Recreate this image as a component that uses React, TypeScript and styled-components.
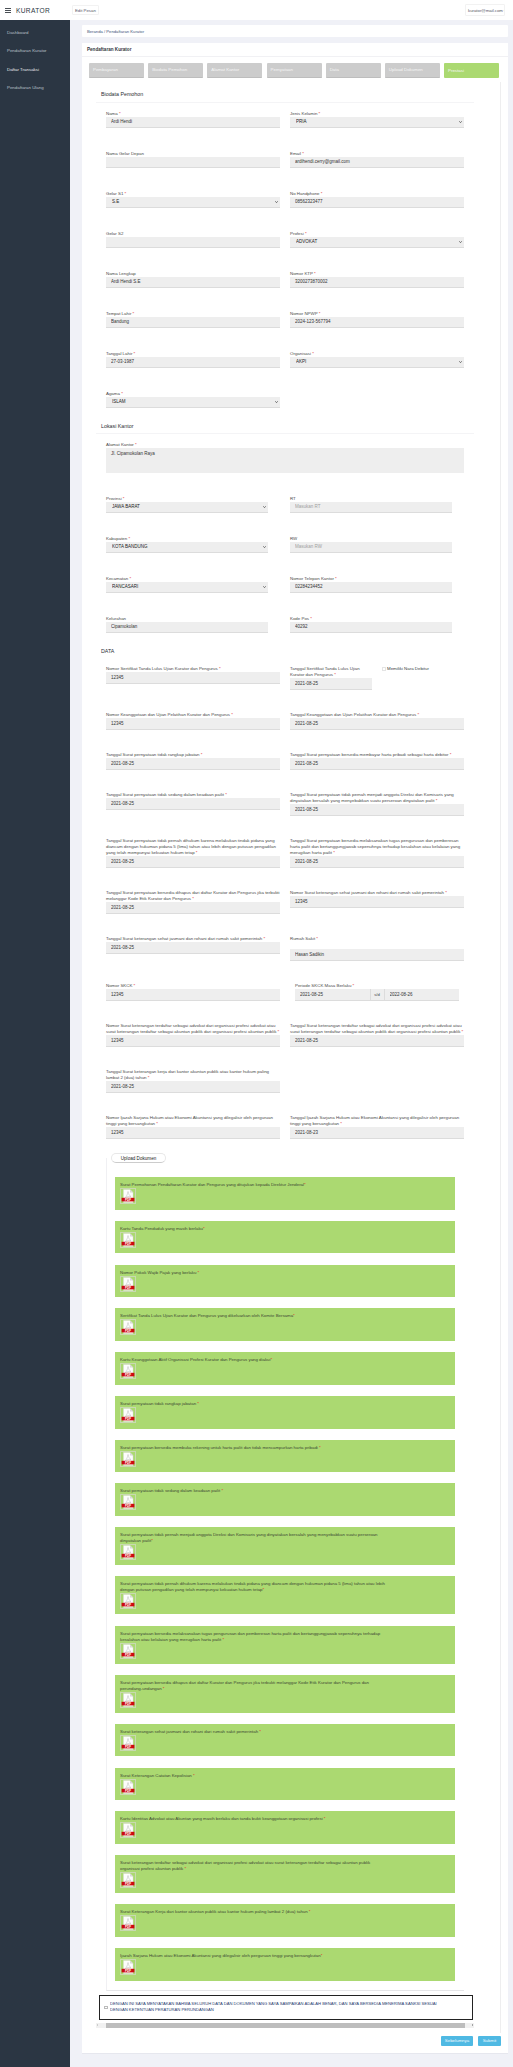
import React from "react";
import styled, { createGlobalStyle } from "styled-components";

const Global = createGlobalStyle`
  html, body { margin: 0; padding: 0; background: #f0f1f7; }
  body { font-family: "Liberation Sans", Arial, sans-serif; font-size: 4.4px; color: #3a3f45; }
  * { box-sizing: border-box; }
`;

const Shell = styled.div`width: 513px; height: 2067px; display: flex; flex-direction: column; overflow: hidden;`;
const TopBar = styled.header`height: 20px; background: #fff; display: flex; align-items: center; padding: 0 8px 0 5px; flex: none;`;
const Burger = styled.div`width: 6px; height: 5px; border-top: 1px solid #4a4f55; border-bottom: 1px solid #4a4f55; position: relative; margin-right: 5px;
  &::after { content: ""; position: absolute; left: 0; right: 0; top: 1px; height: 1px; background: #4a4f55; }`;
const Brand = styled.div`font-size: 6.6px; letter-spacing: 0.35px; color: #2b3643; width: 56px;`;
const Pill = styled.div`border: 1px solid #f2f2f2; border-radius: 1px; font-size: 4.3px; color: #556; padding: 1.5px 2px; line-height: 5px;`;
const UserPill = styled(Pill)`margin-left: auto; padding: 2.5px 2px; width: 40px; white-space: nowrap; overflow: hidden;`;
const Body = styled.div`flex: 1; display: flex; min-height: 0;`;
const Sidebar = styled.nav`width: 70px; flex: none; background: #2b3643; padding-top: 10px;`;
const SideItem = styled.div<{ $on?: boolean }>`height: 18.4px; line-height: 6px; padding: 0 7px; font-size: 4.4px; color: ${p => (p.$on ? "#e8ebee" : "#b8c0c8")};`;
const Main = styled.main`flex: 1; padding: 5px 5px 0 12px;`;
const Crumb = styled.div`height: 12px; background: #fff; border-radius: 1px; display: flex; align-items: center; padding: 0 5px; font-size: 4.2px; color: #44557a;`;
const Card = styled.section`margin-top: 6px; height: 2011px; background: #fff; border-bottom: 1px solid #e6e7ee; padding: 0 7px;`;
const CardHead = styled.div`height: 14px; margin: 0 -7px; padding: 0 5px; border-bottom: 1px solid #f1f1f4; display: flex; align-items: center; font-size: 4.6px; font-weight: 700; color: #33383e;`;
const Tabs = styled.div`display: flex; gap: 4.2px; padding-top: 6px; width: 410px;`;
const Tab = styled.div<{ $on?: boolean }>`flex: 1; height: 14.5px; background: ${p => (p.$on ? "#abd971" : "#cccccc")}; border-bottom: ${p => (p.$on ? "0" : "1px solid #bdbdbd")}; border-radius: 1px;
  color: #f6f6f6; font-size: 4.4px; display: flex; align-items: center; padding: 0 4px;`;
const Panel = styled.div`margin-top: 4px; width: 412px; height: 1951px; border-right: 1px solid #eeeeef; padding: 9px 0 0 7px;`;
const SectionTitle = styled.div<{ $h?: number; $flat?: boolean }>`width: 378px; height: ${p => p.$h ?? 12}px; border-bottom: ${p => (p.$flat ? "0" : "1px solid #f4f4f6")}; padding-left: 5px; font-size: 5.3px; line-height: 7px; color: #2a2e33;`;
const Rows = styled.div`padding: 8px 0 0 10px; width: 358px;`;
const Row = styled.div`display: grid; grid-template-columns: 174px 174px; column-gap: 10px; align-items: start; margin-bottom: 22.5px;
  &:last-child { margin-bottom: 14.5px; }`;
const Spacer = styled.div`height: 23px;`;
const FlexField = styled.div`display: flex; gap: 10px; align-items: flex-start;`;
const Field = styled.div<{ $w?: number; $shift?: number }>`width: ${p => (p.$w ? `${p.$w}px` : "100%")}; margin-left: ${p => p.$shift || 0}px;`;
const Label = styled.div<{ $gap?: boolean }>`font-size: 4.4px; line-height: 6px; color: #4a4a4a; margin-bottom: ${p => (p.$gap ? "7px" : 0)};`;
const Req = styled.span`color: #e02020;`;
const Input = styled.input`display: block; width: 100%; height: 11.5px; border: 0; border-bottom: 1px solid #dcdcdc; background: #eeeeee; padding: 0 5px; font: 4.5px "Liberation Sans", Arial, sans-serif; color: #333; outline: 0;
  &::placeholder { color: #a0a0a0; opacity: 1; }`;
const Area = styled.textarea`display: block; width: 100%; height: 25px; border: 0; background: #eeeeee; padding: 3px 5px; font: 4.5px "Liberation Sans", Arial, sans-serif; color: #333; resize: none; outline: 0;`;
const SelectWrap = styled.div`position: relative; height: 11.5px;`;
const SelectBox = styled.select`display: block; appearance: none; width: 100%; height: 11.5px; border: 0; border-bottom: 1px solid #dcdcdc; background: #eeeeee; padding: 0 0 0 6px; font: 4.5px "Liberation Sans", Arial, sans-serif; color: #222; outline: 0;`;
const Chevron = styled.svg`position: absolute; right: 2.5px; top: 4.5px; width: 3px; height: 2px;`;
const RangeGroup = styled.div`display: flex; height: 11.5px;`;
const Addon = styled.div`flex: none; width: 15px; background: #eeeeee; border-left: 1px solid #dcdcdc; border-right: 1px solid #dcdcdc; border-bottom: 1px solid #dcdcdc; display: flex; align-items: center; justify-content: center; font-size: 4.2px;`;
const CheckRow = styled.label`display: flex; align-items: center; gap: 1.5px; font-size: 4.4px; line-height: 6px; white-space: nowrap;`;
const CheckMark = styled.span`width: 3.5px; height: 3.5px; border: 1px solid #e4e4e4; background: #fff;`;
const Fieldset = styled.fieldset`margin: 0 0 0 10px; width: 358px; padding: 14px 8px 0 8px; border: 0; border-left: 1px solid #f0f0f3; border-bottom: 1px solid #e6e6e9; height: 838px; min-width: 0; position: relative;`;
const Legend = styled.legend`margin: 0 0 0 -4px; padding: 0; height: 10px; width: 55px; border: 1px solid #e8e8e8; border-bottom-color: #ccc; border-radius: 5px; background: #fff; font-size: 4.6px; color: #222; display: flex; align-items: center; justify-content: center;`;
const Doc = styled.div`width: 340px; background: #abd971; padding: 5px; margin-bottom: 11.15px; min-height: 32.65px;`;
const DocLabel = styled.div`font-size: 4.35px; line-height: 6px; color: #3e4a34; white-space: pre-line;`;
const Thumb = styled.div`width: 16px; height: 16px; border: 1px solid #c8d9b0; display: flex; align-items: center; justify-content: center;`;
const Agree = styled.div`margin: 4px 0 0 3px; width: 374px; height: 24.5px; border: 1px solid #222; background: #fff; display: flex; align-items: center; gap: 2.5px; padding: 0 4px; font-size: 4.15px; line-height: 6px; color: #1f3a6e;`;
const AgreeBox = styled.span`flex: none; width: 3.5px; height: 3.5px; border: 1px solid #bbb; background: #fff; align-self: center;`;
const AgreeText = styled.div`white-space: pre; overflow: hidden;`;
const ScrollTrack = styled.div`margin: 3px 0 0; width: 378px; height: 5px; background: #f1f1f1; display: flex; align-items: center; justify-content: space-between; padding: 0 1px;`;
const ScrollThumb = styled.div`width: 359px; height: 5px; background: #bdbdbd; margin-left: 1px;`;
const Arrow = styled.span<{ $r?: boolean }>`width: 0; height: 0; border-top: 1.2px solid transparent; border-bottom: 1.2px solid transparent; ${p => (p.$r ? "border-left: 1.6px solid #555;" : "border-right: 1.6px solid #aaa;")}`;
const Actions = styled.div`display: flex; justify-content: flex-end; gap: 5px; margin-top: 3px; width: 412px;`;
const Btn = styled.button<{ $w: number }>`width: ${p => p.$w}px; height: 10px; border: 0; border-radius: 1px; background: #4fb9e3; color: #f0f8fc; font: 4.4px "Liberation Sans", Arial, sans-serif; padding: 0;`;

const L = ({ t, gap }: { t: string; gap?: boolean }) => (
  <Label $gap={gap}>{t}<Req> *</Req></Label>
);
const P = ({ t }: { t: string }) => <Label>{t}</Label>;

const Sel = ({ v }: { v: string }) => (
  <SelectWrap>
    <SelectBox defaultValue={v} aria-label={v}><option>{v}</option></SelectBox>
    <Chevron viewBox="0 0 6 4"><path d="M0.5 0.5 L3 3.3 L5.5 0.5" fill="none" stroke="#222" strokeWidth="1.2" /></Chevron>
  </SelectWrap>
);
const Txt = ({ v, ph }: { v?: string; ph?: string }) => <Input readOnly value={v ?? ""} placeholder={ph} />;

const PdfIcon = () => (
  <svg width="14" height="14" viewBox="0 0 14 14">
    <path d="M2.5 0.5 H9 L12 3.5 V13.5 H2.5 Z" fill="#fdfdfd" stroke="#dcdcdc" strokeWidth="0.4" />
    <path d="M9 0.5 V3.5 H12 Z" fill="#d8d8d8" />
    <path d="M7 2.5 C7.6 5 8.3 6.5 10 7.6 C8 7.3 6 7.6 4.3 8.5 C5.8 7 6.6 5 7 2.5 Z" fill="none" stroke="#b9b9b9" strokeWidth="0.5" />
    <rect x="0.6" y="8.8" width="12.8" height="3.6" fill="#cc0a12" />
    <text x="7" y="11.7" fontSize="3" fontWeight="700" textAnchor="middle" fill="#fff" fontFamily="Liberation Sans">PDF</text>
  </svg>
);

const tabs = ["Pembayaran", "Biodata Pemohon", "Alamat Kantor", "Pernyataan", "Data", "Upload Dokumen", "Prestasi"];
const date = "2021-08-25";
const docs = [
  "Surat Permohonan Pendaftaran Kurator dan Pengurus yang ditujukan kepada Direktur Jenderal",
  "Kartu Tanda Penduduk yang masih berlaku",
  "Nomor Pokok Wajib Pajak yang berlaku ",
  "Sertifikat Tanda Lulus Ujian Kurator dan Pengurus yang dikeluarkan oleh Komite Bersama",
  "Kartu Keanggotaan Aktif Organisasi Profesi Kurator dan Pengurus yang diakui",
  "Surat pernyataan tidak rangkap jabatan ",
  "Surat pernyataan bersedia membuka rekening untuk harta pailit dan tidak mencampurkan harta pribadi ",
  "Surat pernyataan tidak sedang dalam keadaan pailit ",
  "Surat pernyataan tidak pernah menjadi anggota Direksi dan Komisaris yang dinyatakan bersalah yang menyebabkan suatu perseroan\ndinyatakan pailit",
  "Surat pernyataan tidak pernah dihukum karena melakukan tindak pidana yang diancam dengan hukuman pidana 5 (lima) tahun atau lebih\ndengan putusan pengadilan yang telah mempunyai kekuatan hukum tetap",
  "Surat pernyataan bersedia melaksanakan tugas pengurusan dan pemberesan harta pailit dan bertanggungjawab sepenuhnya terhadap\nkesalahan atau kelalaian yang merugikan harta pailit ",
  "Surat pernyataan bersedia dihapus dari daftar Kurator dan Pengurus jika terbukti melanggar Kode Etik Kurator dan Pengurus dan\nperundang-undangan ",
  "Surat keterangan sehat jasmani dan rohani dari rumah sakit pemerintah ",
  "Surat Keterangan Catatan Kepolisian ",
  "Kartu Identitas Advokat atau Akuntan yang masih berlaku dan tanda bukti keanggotaan organisasi profesi ",
  "Surat keterangan terdaftar sebagai advokat dari organisasi profesi advokat atau surat keterangan terdaftar sebagai akuntan publik\norganisasi profesi akuntan publik ",
  "Surat Keterangan Kerja dari kantor akuntan publik atau kantor hukum paling lambat 2 (dua) tahun ",
  "Ijazah Sarjana Hukum atau Ekonomi Akuntansi yang dilegalisir oleh perguruan tinggi yang bersangkutan",
];

export default function App() {
  return (
    <Shell>
      <Global />
      <TopBar>
        <Burger />
        <Brand>KURATOR</Brand>
        <Pill>Edit Pesan</Pill>
        <UserPill>kurator@mail.com ▾</UserPill>
      </TopBar>
      <Body>
        <Sidebar>
          <SideItem>Dashboard</SideItem>
          <SideItem>Pendaftaran Kurator</SideItem>
          <SideItem $on>Daftar Transaksi</SideItem>
          <SideItem>Pendaftaran Ulang</SideItem>
        </Sidebar>
        <Main>
          <Crumb>Beranda / Pendaftaran Kurator</Crumb>
          <Card>
            <CardHead>Pendaftaran Kurator</CardHead>
            <Tabs>
              {tabs.map((t, i) => <Tab key={t} $on={i === 6}>{t}</Tab>)}
            </Tabs>
            <Panel>
              <SectionTitle>Biodata Pemohon</SectionTitle>
              <Rows>
                <Row><Field><L t="Nama" /><Txt v="Ardi Hendi" /></Field><Field><L t="Jenis Kelamin" /><Sel v="PRIA" /></Field></Row>
                <Row><Field><P t="Nama Gelar Depan" /><Txt /></Field><Field><L t="Email" /><Txt v="ardihendi.cerry@gmail.com" /></Field></Row>
                <Row><Field><L t="Gelar S1" /><Sel v="S.E" /></Field><Field><L t="No Handphone" /><Txt v="08562323477" /></Field></Row>
                <Row><Field><P t="Gelar S2" /><Txt /></Field><Field><L t="Profesi" /><Sel v="ADVOKAT" /></Field></Row>
                <Row><Field><P t="Nama Lengkap" /><Txt v="Ardi Hendi S.E" /></Field><Field><L t="Nomor KTP" /><Txt v="3200273870002" /></Field></Row>
                <Row><Field><L t="Tempat Lahir" /><Txt v="Bandung" /></Field><Field><L t="Nomor NPWP" /><Txt v="2024-123-567794" /></Field></Row>
                <Row><Field><L t="Tanggal Lahir" /><Txt v="27-03-1987" /></Field><Field><L t="Organisasi" /><Sel v="AKPI" /></Field></Row>
                <Row><Field><L t="Agama" /><Sel v="ISLAM" /></Field></Row>
              </Rows>
              <SectionTitle $h={11}>Lokasi Kantor</SectionTitle>
              <Rows>
                <Field $w={358}><L t="Alamat Kantor" /><Area readOnly value="Jl. Cipamokolan Raya" /></Field>
                <Spacer />
                <Row><Field $w={162}><L t="Provinsi" /><Sel v="JAWA BARAT" /></Field><Field $w={162}><P t="RT" /><Txt ph="Masukan RT" /></Field></Row>
                <Row><Field $w={162}><L t="Kabupaten" /><Sel v="KOTA BANDUNG" /></Field><Field $w={162}><P t="RW" /><Txt ph="Masukan RW" /></Field></Row>
                <Row><Field $w={162}><L t="Kecamatan" /><Sel v="RANCASARI" /></Field><Field $w={162}><L t="Nomor Telepon Kantor" /><Txt v="02284234452" /></Field></Row>
                <Row><Field $w={162}><P t="Kelurahan" /><Txt v="Cipamokolan" /></Field><Field $w={162}><L t="Kode Pos" /><Txt v="40292" /></Field></Row>
              </Rows>
              <SectionTitle $h={10.5} $flat>DATA</SectionTitle>
              <Rows>
                <Row>
                  <Field><L t="Nomor Sertifikat Tanda Lulus Ujian Kurator dan Pengurus" /><Txt v="12345" /></Field>
                  <FlexField>
                    <Field $w={82}><L t="Tanggal Sertifikat Tanda Lulus Ujian Kurator dan Pengurus" /><Txt v={date} /></Field>
                    <CheckRow><CheckMark />Memiliki Nara Debitur</CheckRow>
                  </FlexField>
                </Row>
                <Row><Field><L t="Nomor Keanggotaan dan Ujian Pelatihan Kurator dan Pengurus" /><Txt v="12345" /></Field><Field><L t="Tanggal Keanggotaan dan Ujian Pelatihan Kurator dan Pengurus" /><Txt v={date} /></Field></Row>
                <Row><Field><L t="Tanggal Surat pernyataan tidak rangkap jabatan" /><Txt v={date} /></Field><Field><L t="Tanggal Surat pernyataan bersedia membayar harta pribadi sebagai harta debitor" /><Txt v={date} /></Field></Row>
                <Row><Field><L t="Tanggal Surat pernyataan tidak sedang dalam keadaan pailit" /><Txt v={date} /></Field><Field><L t="Tanggal Surat pernyataan tidak pernah menjadi anggota Direksi dan Komisaris yang dinyatakan bersalah yang menyebabkan suatu perseroan dinyatakan pailit" /><Txt v={date} /></Field></Row>
                <Row><Field><L t="Tanggal Surat pernyataan tidak pernah dihukum karena melakukan tindak pidana yang diancam dengan hukuman pidana 5 (lima) tahun atau lebih dengan putusan pengadilan yang telah mempunyai kekuatan hukum tetap" /><Txt v={date} /></Field><Field><L t="Tanggal Surat pernyataan bersedia melaksanakan tugas pengurusan dan pemberesan harta pailit dan bertanggungjawab sepenuhnya terhadap kesalahan atau kelalaian yang merugikan harta pailit" /><Txt v={date} /></Field></Row>
                <Row><Field><L t="Tanggal Surat pernyataan bersedia dihapus dari daftar Kurator dan Pengurus jika terbukti melanggar Kode Etik Kurator dan Pengurus" /><Txt v={date} /></Field><Field><L t="Nomor Surat keterangan sehat jasmani dan rohani dari rumah sakit pemerintah" /><Txt v="12345" /></Field></Row>
                <Row><Field><L t="Tanggal Surat keterangan sehat jasmani dan rohani dari rumah sakit pemerintah" /><Txt v={date} /></Field><Field><L t="Rumah Sakit" gap /><Txt v="Hasan Sadikin" /></Field></Row>
                <Row>
                  <Field><L t="Nomor SKCK" /><Txt v="12345" /></Field>
                  <Field $w={164} $shift={5}><L t="Periode SKCK Masa Berlaku" />
                    <RangeGroup><Txt v={date} /><Addon>s/d</Addon><Txt v="2022-08-26" /></RangeGroup>
                  </Field>
                </Row>
                <Row><Field><L t="Nomor Surat keterangan terdaftar sebagai advokat dari organisasi profesi advokat atau surat keterangan terdaftar sebagai akuntan publik dari organisasi profesi akuntan publik" /><Txt v="12345" /></Field><Field><L t="Tanggal Surat keterangan terdaftar sebagai advokat dari organisasi profesi advokat atau surat keterangan terdaftar sebagai akuntan publik dari organisasi profesi akuntan publik" /><Txt v={date} /></Field></Row>
                <Row><Field><L t="Tanggal Surat keterangan kerja dari kantor akuntan publik atau kantor hukum paling lambat 2 (dua) tahun" /><Txt v={date} /></Field></Row>
                <Row><Field><L t="Nomor Ijazah Sarjana Hukum atau Ekonomi Akuntansi yang dilegalisir oleh perguruan tinggi yang bersangkutan" /><Txt v="12345" /></Field><Field><L t="Tanggal Ijazah Sarjana Hukum atau Ekonomi Akuntansi yang dilegalisir oleh perguruan tinggi yang bersangkutan" /><Txt v="2021-08-23" /></Field></Row>
              </Rows>
              <Fieldset>
                <Legend>Upload Dokumen</Legend>
                {docs.map((d, i) => (
                  <Doc key={i}>
                    <DocLabel>{d}<Req>*</Req></DocLabel>
                    <Thumb><PdfIcon /></Thumb>
                  </Doc>
                ))}
              </Fieldset>
              <Agree>
                <AgreeBox />
                <AgreeText>{"DENGAN INI SAYA MENYATAKAN BAHWA SELURUH DATA DAN DOKUMEN YANG SAYA SAMPAIKAN ADALAH BENAR, DAN SAYA BERSEDIA MENERIMA SANKSI SESUAI\nDENGAN KETENTUAN PERATURAN PERUNDANGAN"}</AgreeText>
              </Agree>
              <ScrollTrack><Arrow /><ScrollThumb /><Arrow $r /></ScrollTrack>
            </Panel>
            <Actions>
              <Btn $w={32}>Sebelumnya</Btn>
              <Btn $w={23}>Submit</Btn>
            </Actions>
          </Card>
        </Main>
      </Body>
    </Shell>
  );
}
